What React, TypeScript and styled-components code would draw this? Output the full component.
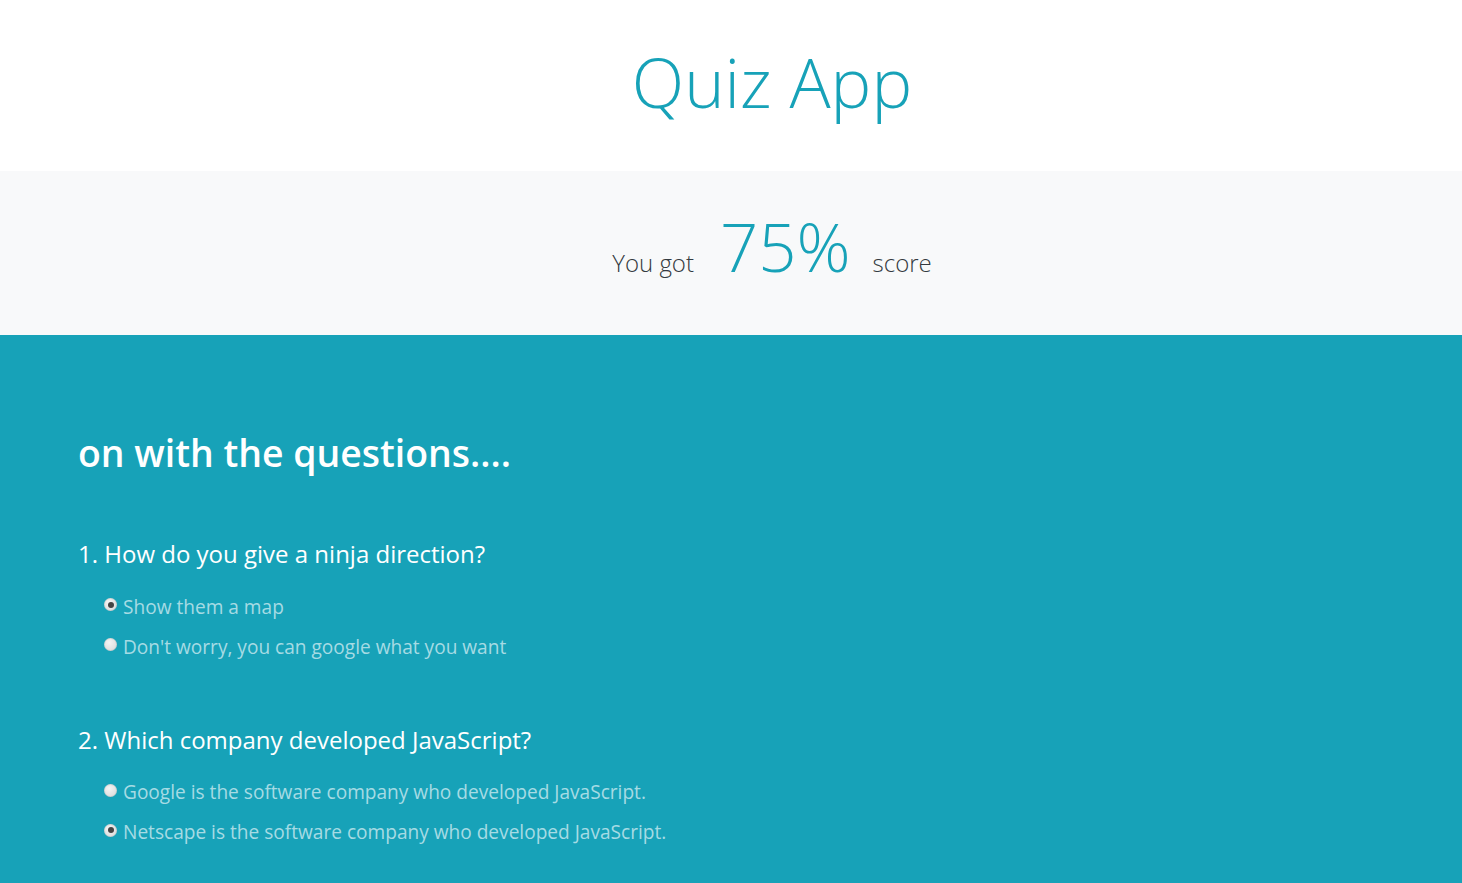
import React from "react";
import styled, { createGlobalStyle } from "styled-components";

const GlobalStyle = createGlobalStyle`
  html, body { margin: 0; padding: 0; }
  body {
    font-family: "Open Sans", "Noto Sans", sans-serif;
    background: #17a2b8;
    -webkit-font-smoothing: antialiased;
  }
`;

const Page = styled.div`
  min-height: 883px;
  display: flex;
  flex-direction: column;
`;

const Header = styled.header`
  height: 171px;
  background: #ffffff;
  display: flex;
  align-items: center;
  justify-content: center;
  padding-left: 82px;
  padding-bottom: 6px;
  box-sizing: border-box;
`;

const Title = styled.h1`
  margin: 0;
  font-size: 68.5px;
  font-weight: 300;
  line-height: 1;
  color: #17a2b8;
`;

const ScoreBar = styled.section`
  height: 164px;
  background: #f8f9fa;
  display: flex;
  align-items: baseline;
  justify-content: center;
  padding-left: 82px;
  padding-top: 35px;
  box-sizing: border-box;
`;

const ScoreLabel = styled.span`
  font-size: 24px;
  font-weight: 300;
  color: #343a40;
`;

const ScoreValue = styled.span`
  font-size: 67px;
  font-weight: 300;
  color: #17a2b8;
  margin: 0 22px 0 26px;
  line-height: 1.2;
`;

const Questions = styled.main`
  flex: 1;
  background: #17a2b8;
  padding: 96px 78px 10px;
`;

const Heading = styled.h2`
  margin: 0 0 64px;
  font-size: 37.4px;
  font-weight: 600;
  color: #ffffff;
  line-height: 1.2;
`;

const QuestionBlock = styled.div`
  margin-bottom: 66px;
`;

const QuestionText = styled.h4`
  margin: 0 0 25px;
  font-size: 24px;
  font-weight: 400;
  color: #ffffff;
  line-height: 1.2;
`;

const OptionList = styled.div`
  display: flex;
  flex-direction: column;
  gap: 14px;
  padding-left: 26px;
`;

const OptionRow = styled.label`
  display: flex;
  align-items: center;
  gap: 6px;
  font-size: 19.1px;
  line-height: 26px;
  color: #a6dbe4;
`;

const Radio = styled.span<{ $checked?: boolean }>`
  width: 13px;
  height: 13px;
  border-radius: 50%;
  box-sizing: border-box;
  background: radial-gradient(circle at 40% 35%, #f4f4f4 0%, #d6d6d6 100%);
  box-shadow: inset 0 0 0 1px rgba(0, 0, 0, 0.08);
  display: flex;
  align-items: center;
  justify-content: center;
  margin-top: -4px;
  flex-shrink: 0;
  &::after {
    content: "";
    width: 6px;
    height: 6px;
    border-radius: 50%;
    background: #444;
    display: ${(p) => (p.$checked ? "block" : "none")};
  }
`;

const questions = [
  {
    q: "1. How do you give a ninja direction?",
    options: ["Show them a map", "Don't worry, you can google what you want"],
    checked: 0,
  },
  {
    q: "2. Which company developed JavaScript?",
    options: [
      "Google is the software company who developed JavaScript.",
      "Netscape is the software company who developed JavaScript.",
    ],
    checked: 1,
  },
];

export default function App() {
  return (
    <Page>
      <GlobalStyle />
      <Header>
        <Title>Quiz App</Title>
      </Header>
      <ScoreBar>
        <ScoreLabel>You got</ScoreLabel>
        <ScoreValue>75%</ScoreValue>
        <ScoreLabel>score</ScoreLabel>
      </ScoreBar>
      <Questions>
        <Heading>on with the questions....</Heading>
        {questions.map((item) => (
          <QuestionBlock key={item.q}>
            <QuestionText>{item.q}</QuestionText>
            <OptionList>
              {item.options.map((o, i) => (
                <OptionRow key={o}>
                  <Radio $checked={i === item.checked} />
                  {o}
                </OptionRow>
              ))}
            </OptionList>
          </QuestionBlock>
        ))}
      </Questions>
    </Page>
  );
}
